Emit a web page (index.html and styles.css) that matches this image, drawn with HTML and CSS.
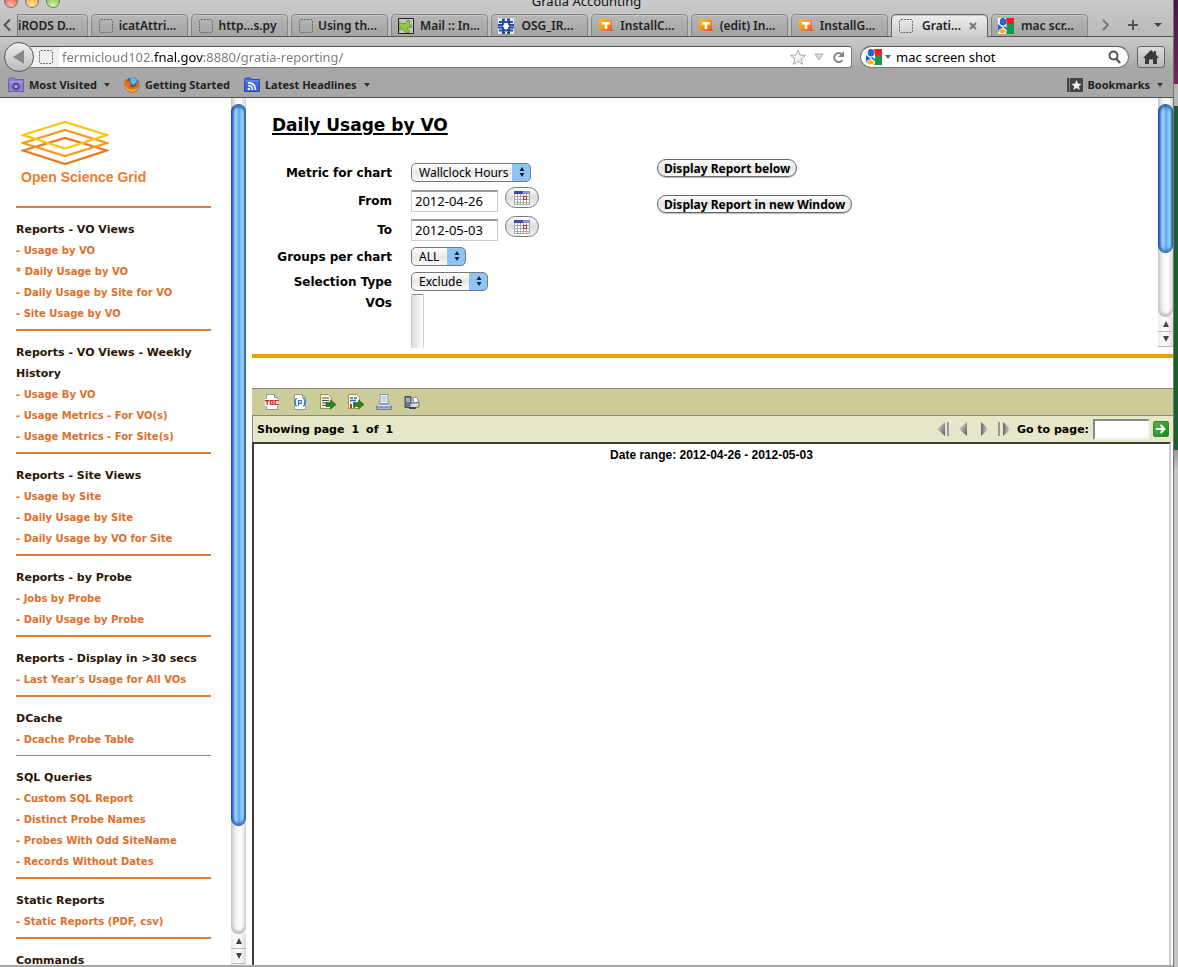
FILE: index.html
```html
<!DOCTYPE html>
<html lang="en">
<head>
<meta charset="utf-8">
<title>Gratia Accounting</title>
<link rel="stylesheet" href="styles.css">
</head>
<body>
<svg class="defs" aria-hidden="true">
  <defs>
    <linearGradient id="orange" x1="0" y1="0" x2="1" y2="1"><stop offset="0" stop-color="#f8c71c"/><stop offset=".5" stop-color="#f7931e"/><stop offset="1" stop-color="#ee3f24"/></linearGradient>
    <linearGradient id="steel" x1="0" y1="0" x2="1" y2="1"><stop offset="0" stop-color="#eee"/><stop offset="1" stop-color="#555"/></linearGradient>
    <linearGradient id="steelr" x1="1" y1="0" x2="0" y2="0"><stop offset="0" stop-color="#eee"/><stop offset="1" stop-color="#666"/></linearGradient>
    <symbol id="blank" viewBox="0 0 16 16"><rect x="1.5" y="1.5" width="13" height="13" rx="1.5" fill="none" stroke="#6b6b6b" stroke-dasharray="2 1"/></symbol>
    <symbol id="twiki" viewBox="0 0 16 16"><path d="M3 1h9q2 0 2 2v8q0 1 2 2H4q-3 0-3-3V3q0-2 2-2z" fill="url(#orange)"/><path d="M4 4h8v2.400H9.300V11H6.700V6.400H4z" fill="#fff"/></symbol>
    <symbol id="google" viewBox="0 0 16 16"><path d="M0 0h8v16H0z" fill="#fff"/><path d="M8 0h8v6H9z" fill="#f01d25"/><path d="M9 6h7v10H8q2-3 0-5 2-2 1-5z" fill="#129a46"/><path d="M0 6l5 4-1 3-4 1z" fill="#2a62c9"/><ellipse cx="5" cy="3.800" rx="3.300" ry="3.800" fill="#2a62c9"/><path d="M5 8l3 1 1 3-3-2z" fill="#2a62c9"/><ellipse cx="4.500" cy="13.300" rx="3.800" ry="2.500" fill="#f6b21b" stroke="#fff" stroke-width=".8"/></symbol>
    <symbol id="calendar" viewBox="0 0 16 14"><path d="M0 0h16v14H0z" fill="#aaa"/><path d="M0 0h9v3H0z" fill="#3d46b4"/><path d="M9 0h7v3H9z" fill="#8b92c4"/><path d="M1 3h2v2H1zm3 0h2v2H4zm3 0h2v2H7zm3 0h2v2h-2zm3 0h2v2h-2zM1 6h2v2H1zm3 0h2v2H4zm3 0h2v2H7zm6 0h2v2h-2zM1 9h2v2H1zm3 0h2v2H4zm3 0h2v2H7zm3 0h2v2h-2zm3 0h2v2h-2zM1 12h2v1H1zm3 0h2v1H4zm3 0h2v1H7zm3 0h2v1h-2zm3 0h2v1h-2z" fill="#fff"/><path d="M9.500 5.500h3v3h-3z" fill="#fff" stroke="#b22"/></symbol>
    <symbol id="updown" viewBox="0 0 8 12"><path d="M1.500 5L4 1l2.500 4zM1.500 7L4 11l2.500-4z" fill="#14233a"/></symbol>
  </defs>
</svg>
<div class="screen">
  <div class="window">
    <header class="chrome">
      <div class="titlebar">
        <div class="lights"><i class="light red"></i><i class="light amber"></i><i class="light green"></i></div>
        <span class="title">Gratia Accounting</span>
      </div>
      <nav class="tabs" aria-label="Tabs">
        <button class="scroll" aria-label="Previous tabs"><svg width="10" height="14" viewBox="0 0 10 14"><path d="M8 1.500L2.500 7 8 12.500" fill="none" stroke="#555" stroke-width="2"/></svg></button>
        <button class="tab first">iRODS D...</button>
        <button class="tab"><svg class="ico"><use href="#blank"/></svg><span>icatAttri...</span></button>
        <button class="tab"><svg class="ico"><use href="#blank"/></svg><span>http...s.py</span></button>
        <button class="tab"><svg class="ico"><use href="#blank"/></svg><span>Using th...</span></button>
        <button class="tab near"><svg class="ico" viewBox="0 0 16 16"><path d="M.5.5h15v15H.5z" fill="#c3c6ca" stroke="#222"/><path d="M1 4l3 2 2-1 1 1 3-4 2 1-1 3 3 2-1 2-3-1-1 2 3 2-1 2-4-1-2-3-4 1 1-3-1-2z" fill="#94c83d" stroke="#4a7a1c" stroke-width=".6"/></svg><span>Mail :: In...</span></button>
        <button class="tab"><svg class="ico" viewBox="0 0 16 16"><path d="M0 0h16v16H0z" fill="#e6eaf3"/><g stroke="#2149a5" stroke-width="1.800"><path d="M4 1.500h3M9 1.500h3M1 4h14M0 7h5M11 7h5M0 9.500h5M11 9.500h5M1 12.500h14M4 15h3M9 15h3M5 1v14M11 1v14"/></g><path d="M8 3.500L9.500 7 13 8 9.500 9.500 8 13 6.500 9.500 3 8l3.500-1z" fill="#fff"/><circle cx="8" cy="8" r="4" fill="none" stroke="#2149a5" stroke-width="1.200"/></svg><span>OSG_IR...</span></button>
        <button class="tab"><svg class="ico"><use href="#twiki"/></svg><span>InstallC...</span></button>
        <button class="tab"><svg class="ico"><use href="#twiki"/></svg><span>(edit) In...</span></button>
        <button class="tab"><svg class="ico"><use href="#twiki"/></svg><span>InstallG...</span></button>
        <button class="tab active"><svg class="ico"><use href="#blank"/></svg><span>Grati...</span><svg class="close" width="8" height="8" viewBox="0 0 8 8"><path d="M1 1l6 6M7 1L1 7" stroke="#777" stroke-width="2"/></svg></button>
        <button class="tab"><svg class="ico"><use href="#google"/></svg><span>mac scr...</span></button>
        <span class="tabtools">
          <button aria-label="Next tabs"><svg width="10" height="12" viewBox="0 0 10 12"><path d="M2 1l5 5-5 5" fill="none" stroke="#777" stroke-width="2"/></svg></button>
          <button aria-label="New tab"><svg width="10" height="10" viewBox="0 0 10 10"><path d="M5 0v10M0 5h10" stroke="#555" stroke-width="2"/></svg></button>
          <button aria-label="List all tabs"><svg width="8" height="4" viewBox="0 0 8 4"><path d="M0 0h8L4 4z" fill="#444"/></svg></button>
        </span>
      </nav>
      <div class="navbar">
        <button class="back" aria-label="Back"><svg width="14" height="14" viewBox="0 0 14 14"><path d="M1 7l11-7v14z" fill="#888"/></svg></button>
        <div class="urlbar">
          <svg class="ico"><use href="#blank"/></svg>
          <input class="url" type="text" aria-label="Address" value="fermicloud102.fnal.gov:8880/gratia-reporting/">
          <button aria-label="Bookmark this page"><svg width="16" height="16" viewBox="0 0 16 16"><path d="M8 1l2 5 5.500.4-4.300 3.500 1.500 5.400L8 12.300l-4.700 3 1.500-5.400L.5 6.400 6 6z" fill="#f4f4f4" stroke="#aaa"/></svg></button>
          <button aria-label="History"><svg width="10" height="8" viewBox="0 0 10 8"><path d="M1 1h8L5 7z" fill="#ddd" stroke="#aaa"/></svg></button>
          <button aria-label="Reload"><svg width="13" height="13" viewBox="0 0 13 13"><path d="M10.500 9a4.500 4.500 0 1 1-.5-5.500" fill="none" stroke="#888" stroke-width="2"/><path d="M12 0v6H6z" fill="#888"/></svg></button>
        </div>
        <div class="searchbar">
          <svg class="ico"><use href="#google"/></svg>
          <svg width="6" height="4" viewBox="0 0 6 4"><path d="M0 0h6L3 4z" fill="#666"/></svg>
          <input type="text" aria-label="Search" value="mac screen shot">
          <svg width="13" height="14" viewBox="0 0 13 14"><circle cx="5.500" cy="5.500" r="4" fill="none" stroke="#555" stroke-width="2"/><path d="M8 8.500l4 4.500" stroke="#555" stroke-width="2.500"/></svg>
        </div>
        <button class="home" aria-label="Home"><svg width="16" height="14" viewBox="0 0 16 14"><path d="M8 0l3 2.800V1h2v3.700L16 8h-2v6h-4V9.500H6V14H2V8H0z" fill="#3a3a3a"/></svg></button>
      </div>
      <nav class="bookmarks" aria-label="Bookmarks">
        <button><svg class="ico" viewBox="0 0 16 16"><path d="M.5 2.500l1-1.500h5l1 1.500h8v12H.5z" fill="#9181cb" stroke="#6d5fae"/><path d="M1 5h14" stroke="#b8acdf"/><circle cx="8" cy="9.500" r="2.500" fill="none" stroke="#5a4aa3" stroke-width="2"/><path d="M8 5v9M3.500 9.500h9M5 6.500l6 6M11 6.500l-6 6" stroke="#5a4aa3"/><circle cx="8" cy="9.500" r="1.500" fill="#b8acdf"/></svg>Most Visited<i class="caret"></i></button>
        <button><svg class="ico" viewBox="0 0 16 16"><circle cx="8" cy="8" r="7.500" fill="#2463b4"/><path d="M6 1q5-1 7 3l-3 4-3-2z" fill="#65b9e9"/><path d="M1 2l2 1.500L7 4 5.500 6l3 1L6 8.500q1 2.500 4 1.500 3-1 2.500-6L15 6q1 5-2.500 8-4 3-8.500.5Q-1 10 1 2z" fill="#e66b12"/><path d="M1 7q2 6 8 5.500 4-.5 5.800-4Q14 14 8 15 1 14 1 7z" fill="#f9a51b"/></svg>Getting Started</button>
        <button><svg class="ico" viewBox="0 0 16 16"><path d="M.5 2.500l1-1.500h5l1 1.500h8v12H.5z" fill="#3f68dc" stroke="#2749b5"/><path d="M1 4h14" stroke="#7d9bf0"/><circle cx="5" cy="12" r="1.300" fill="#fff"/><path d="M4 8.500q4.500 0 4.500 4.500M4 5.700q7.500 0 7.500 7.300" fill="none" stroke="#fff" stroke-width="1.500"/></svg>Latest Headlines<i class="caret"></i></button>
        <button class="right"><svg class="ico" viewBox="0 0 16 16"><path d="M0 1h16v14H0z" fill="#444"/><path d="M2 1h1v14H2z" fill="#888"/><path d="M9.500 3l1.500 3.600 3.700.3-2.900 2.400 1 3.700-3.300-2-3.300 2 1-3.700-2.900-2.400 3.700-.3z" fill="#eee"/></svg>Bookmarks<i class="caret"></i></button>
      </nav>
    </header>

    <div class="page">
      <aside class="sidebar">
        <div class="logo">
          <svg width="88" height="44" viewBox="0 0 88 44"><g fill="none" stroke-width="2.300"><path d="M2 29.500L44 17l42 12.500L44 43z" stroke="#ee7623"/><path d="M2 22L44 9l42 13-42 13z" stroke="#f39a1f"/><path d="M2 14L44 1l42 13-42 13.500z" stroke="#fbc70d"/></g></svg>
          <span>Open Science Grid</span>
        </div>
        <section><h2>Reports - VO Views</h2><a href="#">- Usage by VO</a><a href="#">* Daily Usage by VO</a><a href="#">- Daily Usage by Site for VO</a><a href="#">- Site Usage by VO</a></section>
        <section><h2>Reports - VO Views - Weekly History</h2><a href="#">- Usage By VO</a><a href="#">- Usage Metrics - For VO(s)</a><a href="#">- Usage Metrics - For Site(s)</a></section>
        <section><h2>Reports - Site Views</h2><a href="#">- Usage by Site</a><a href="#">- Daily Usage by Site</a><a href="#">- Daily Usage by VO for Site</a></section>
        <section><h2>Reports - by Probe</h2><a href="#">- Jobs by Probe</a><a href="#">- Daily Usage by Probe</a></section>
        <section><h2>Reports - Display in &gt;30 secs</h2><a href="#">- Last Year's Usage for All VOs</a></section>
        <section><h2>DCache</h2><a href="#">- Dcache Probe Table</a></section>
        <section class="thin"><h2>SQL Queries</h2><a href="#">- Custom SQL Report</a><a href="#">- Distinct Probe Names</a><a href="#">- Probes With Odd SiteName</a><a href="#">- Records Without Dates</a></section>
        <section><h2>Static Reports</h2><a href="#">- Static Reports (PDF, csv)</a></section>
        <section><h2>Commands</h2></section>
      </aside>
      <div class="scrollbar"><div class="track"><div class="thumb tall"></div></div><i class="arrow up"></i><i class="arrow down"></i></div>

      <main class="content">
        <div class="params">
          <form class="form">
            <h1>Daily Usage by VO</h1>
            <div class="columns">
              <div class="fields">
                <label for="metric">Metric for chart</label>
                <span class="select wide"><select id="metric"><option>Wallclock Hours</option></select><svg width="8" height="12"><use href="#updown"/></svg></span>
                <label for="from">From</label>
                <span class="date"><input id="from" type="text" value="2012-04-26"><button type="button" aria-label="Pick start date"><svg width="16" height="14"><use href="#calendar"/></svg></button></span>
                <label for="to">To</label>
                <span class="date"><input id="to" type="text" value="2012-05-03"><button type="button" aria-label="Pick end date"><svg width="16" height="14"><use href="#calendar"/></svg></button></span>
                <label for="groups">Groups per chart</label>
                <span class="select small"><select id="groups"><option>ALL</option></select><svg width="8" height="12"><use href="#updown"/></svg></span>
                <label for="seltype">Selection Type</label>
                <span class="select medium"><select id="seltype"><option>Exclude</option></select><svg width="8" height="12"><use href="#updown"/></svg></span>
                <label class="top" for="vos">VOs</label>
                <select class="list" id="vos" multiple></select>
              </div>
              <div class="actions">
                <button type="button">Display Report below</button>
                <button type="button">Display Report in new Window</button>
              </div>
            </div>
          </form>
          <div class="scrollbar"><div class="track"><div class="thumb short"></div></div><i class="arrow up"></i><i class="arrow down"></i></div>
        </div>
        <div class="viewer">
          <div class="toolbar">
            <button aria-label="Table of contents"><svg class="ico" viewBox="0 0 16 16"><path d="M2.500.5h8l3 3v12h-11z" fill="#fff" stroke="#8b98a8"/><path d="M10.500.5v3h3" fill="#c8d3e0" stroke="#8b98a8"/><path d="M1 5h13v7H1z" fill="#fff"/><g fill="none" stroke="#d8201c" stroke-width="1.300"><path d="M1 6.600h4.400M3.200 6.600V11M6.500 6.600h2.500v3.800H6.500zM14.500 6.600h-3.500v3.800h3.500"/></g></svg></button>
            <button aria-label="Run report"><svg class="ico" viewBox="0 0 16 16"><path d="M2.500.5h8l3 3v12h-11z" fill="#fff" stroke="#8b98a8"/><path d="M10.500.5v3h3" fill="#c8d3e0" stroke="#8b98a8"/><g fill="none" stroke="#2678ac" stroke-width="1.200"><path d="M5 4.500q-1.500 0-1.500 1.500v1L2.500 8l1 1v1.500Q3.500 12 5 12M11 4.500q1.500 0 1.500 1.500v1l1 1-1 1v1.500Q12.500 12 11 12M6.500 12V6.500h2.700v3H6.500"/></g></svg></button>
            <button aria-label="Export data"><svg class="ico" viewBox="0 0 16 16"><path d="M.5.500h8l3 3v11H.5z" fill="#f6f3d2" stroke="#94916c"/><path d="M2 4h7M2 6.500h7M2 9h5M2 11.500h5" stroke="#4b5968"/><path d="M6 8.500h4.500V6L16 10.500 10.500 15v-2.500H6z" fill="#2f7d20" stroke="#205c16" stroke-width=".6"/></svg></button>
            <button aria-label="Export report"><svg class="ico" viewBox="0 0 16 16"><path d="M.5.500h8l3 3v11H.5z" fill="#fff" stroke="#c28b37"/><path d="M2 4h3M6 4h3M2 6.500h6" stroke="#2c6aa8" stroke-width="1.500"/><path d="M2 10h2v4H2z" fill="#d92b20"/><path d="M5 8h2v6H5z" fill="#2b8fc7"/><path d="M6 8.500h4.500V6L16 10.500 10.500 15v-2.500H6z" fill="#2f7d20" stroke="#205c16" stroke-width=".6"/></svg></button>
            <button aria-label="Print report"><svg class="ico" viewBox="0 0 16 16"><path d="M4 .5h8v9H4z" fill="#f4f8fc" stroke="#7b92b3"/><path d="M5.500 3h5M5.500 5h5M5.500 7h5" stroke="#94acd0"/><path d="M2.500 9.500H4v1h8v-1h1.500l2 3.500H.5z" fill="#d5dbe6" stroke="#8d98aa" stroke-width=".8"/><path d="M.5 13h15v2.500H.5z" fill="#a3b7d6" stroke="#5a6e90" stroke-width=".8"/></svg></button>
            <button aria-label="Print on server"><svg class="ico" viewBox="0 0 16 16"><path d="M1 2.500h6v11H1z" fill="#677787" stroke="#45515d"/><path d="M2 5h4M2 7h4" stroke="#e7edf2"/><path d="M9 4l4-1 1.500 5L10 9.500z" fill="#fff" stroke="#889"/><path d="M6 9.500l9-1v4l-6 2H6z" fill="#d5dbe1" stroke="#66717c"/><path d="M5 14h7" stroke="#3d474f" stroke-width="2"/></svg></button>
          </div>
          <div class="pager">
            <span class="showing"><span>Showing page</span><span>1</span><span>of</span><span>1</span></span>
            <button aria-label="First page"><svg width="14" height="14" viewBox="0 0 14 14"><path d="M8 0v14L0 7z" fill="url(#steel)"/><path d="M10 0h2v14h-2z" fill="#999"/></svg></button>
            <button aria-label="Previous page"><svg width="14" height="14" viewBox="0 0 14 14"><path d="M10 0v14L2 7z" fill="url(#steel)"/></svg></button>
            <button aria-label="Next page"><svg width="14" height="14" viewBox="0 0 14 14"><path d="M4 0v14l8-7z" fill="url(#steelr)"/></svg></button>
            <button aria-label="Last page"><svg width="14" height="14" viewBox="0 0 14 14"><path d="M6 0v14l8-7z" fill="url(#steelr)"/><path d="M1 0h2v14H1z" fill="#999"/></svg></button>
            <label for="goto">Go to page:</label>
            <input id="goto" type="text">
            <button class="go" aria-label="Go"><svg width="10" height="10" viewBox="0 0 10 10"><path d="M0 5h8M4.500 1l4 4-4 4" fill="none" stroke="#fff" stroke-width="2"/></svg></button>
          </div>
          <div class="report">Date range: 2012-04-26 - 2012-05-03</div>
        </div>
      </main>
    </div>
  </div>
  <div class="desktop" aria-hidden="true"><div class="wall"></div><div class="bar"></div><div class="terminal"></div><div class="rest"></div></div>
</div>
</body>
</html>
```
FILE: styles.css
```css
* { box-sizing: border-box; }
body { margin: 0; background: #fff; color: #000; font-family: "DejaVu Sans", Verdana, sans-serif; }
button { margin: 0; padding: 0; border: 0; background: none; color: inherit; font: inherit; white-space: nowrap; }
input, select { margin: 0; font: inherit; color: inherit; min-width: 0; outline: 0; }
svg { display: block; flex: none; }
.defs { position: absolute; width: 0; height: 0; }
.ico { width: 16px; height: 16px; }
.screen { display: flex; height: 100vh; overflow: hidden; }
.window { flex: 1; min-width: 0; display: flex; flex-direction: column; border-bottom: 2px solid #a5a5a5; }

/* Browser chrome */
.chrome { flex: none; background: linear-gradient(#cbcbcb, #b9b9b9 36px, #c9c9c9 38px, #a7a7a7 70px); border-bottom: 1px solid #505050; font: 600 12px/16px "Noto Sans", "Open Sans", sans-serif; color: #222; }
.titlebar { position: relative; height: 14px; overflow: hidden; display: flex; justify-content: center; align-items: flex-end; }
.title { font-weight: 400; font-size: 13px; line-height: 26px; color: #111; height: 26px; }
.lights { position: absolute; left: 4px; top: -6px; display: flex; gap: 7px; }
.light { width: 14px; height: 14px; border-radius: 50%; border: 1px solid #776; }
.red { background: radial-gradient(circle at 50% 90%, #ffb8b0, #e0423c); }
.amber { background: radial-gradient(circle at 50% 90%, #ffe9a0, #e89b2a); }
.green { background: radial-gradient(circle at 50% 90%, #d8f4a8, #6fae3d); }
.tabs { display: flex; gap: 3px; height: 23px; border-bottom: 1px solid #585858; }
.scroll { width: 14px; padding-left: 2px; }
.tab { display: flex; align-items: center; flex: 0 1 97px; min-width: 0; height: 22px; padding: 0 6px; background: linear-gradient(#b7b7b7, #a3a3a3); border: 1px solid #868686; border-bottom: 0; border-radius: 5px 5px 0 0; box-shadow: inset 0 1px #c8c8c8; overflow: hidden; }
.tab span { flex: 1; text-align: center; }
.tab.near span { text-align: left; padding-left: 6px; }
.tab.first { flex-basis: 71px; padding: 0; border-left: 1px solid #777; border-radius: 0 5px 0 0; }
.tab.active { height: 23px; background: linear-gradient(#eee, #ccc); border-color: #666; }
.close { margin-right: 4px; }
.tabtools { display: flex; flex: 1; align-items: center; justify-content: space-between; padding: 0 11px 0 10px; }
.navbar { display: flex; align-items: center; height: 40px; padding: 0 8px 0 4px; }
.back { z-index: 1; width: 30px; height: 30px; padding-left: 7px; border: 1px solid #555; border-radius: 50%; background: linear-gradient(#eee, #bbb); }
.urlbar { display: flex; flex: 1; align-items: center; height: 22px; margin-left: -4px; padding: 0 6px 0 8px; gap: 8px; background: linear-gradient(90deg, #f0f0f0 29px, #fff 29px); border: 1px solid #777; border-top-color: #555; border-left: 0; border-radius: 0 3px 3px 0; }
.urlbar input { flex: 1; border: 0; padding: 0; height: 20px; font-weight: 400; font-size: 13px; color: transparent; background: linear-gradient(90deg, #777 91px, #000 91px 142px, #777 142px); -webkit-background-clip: text; background-clip: text; }
.searchbar { display: flex; align-items: center; gap: 3px; width: 269px; height: 22px; margin: 0 8px; padding: 0 7px 0 5px; background: #fff; border: 1px solid #777; border-top-color: #555; border-radius: 11px; }
.searchbar input { flex: 1; border: 0; padding: 0 0 0 2px; height: 20px; font-weight: 400; font-size: 13px; background: none; color: #000; }
.home { display: grid; place-items: center; width: 28px; height: 22px; border: 1px solid #666; border-radius: 3px; background: linear-gradient(#ddd, #b8b8b8); }
.bookmarks { display: flex; gap: 14px; height: 20px; padding: 0 10px 0 8px; font-size: 11px; font-weight: 700; }
.bookmarks button { display: flex; align-items: center; height: 16px; gap: 5px; }
.bookmarks .right { margin-left: auto; }
.caret { border: 3px solid transparent; border-top: 4px solid #333; border-bottom: 0; margin-left: 2px; }

/* Page frames */
.page { flex: 1; min-height: 0; display: flex; }
.sidebar { width: 231px; flex: none; padding: 23px 20px 0 16px; overflow: hidden; font-size: 10px; line-height: 21px; font-weight: 700; }
.logo { height: 85px; padding-left: 5px; }
.logo span { display: block; margin-top: 3px; font: 700 14px/18px "Liberation Sans", Arial, sans-serif; color: #ee7c2b; }
.sidebar section { padding: 11px 0 5px; border-top: 2px solid #e07b39; }
.sidebar section:last-child { padding-bottom: 0; }
.sidebar .thin { border-top: 1px solid #888; }
.sidebar h2 { margin: 0; font-size: 11px; line-height: 21px; color: #2e1503; }
.sidebar a { display: block; color: #dd6f2b; text-decoration: none; white-space: nowrap; }
.scrollbar { width: 15px; flex: none; display: flex; flex-direction: column; padding-bottom: 1px; background: #f4f4f4; }
.track { flex: 1; padding-top: 6px; background: linear-gradient(90deg, #ccc, #f3f3f3 35%, #fff 65%, #ddd); border-radius: 0 0 8px 8px; box-shadow: inset 0 -3px 3px #bbb; }
.thumb { border: 1px solid #3a5f96; border-left-color: #1d4fae; border-radius: 8px; background: linear-gradient(90deg, #2c6fd0, #a9cff5 25%, #86bdf3 45%, #58a5ee 52%, #a3e0fe 85%, #5a8ec4); box-shadow: inset 0 2px 3px #2460bb, inset 0 -2px 3px #2f7ad0; }
.thumb.tall { height: 87%; }
.thumb.short { height: 70%; }
.arrow { display: grid; place-items: center; height: 15px; background: linear-gradient(90deg, #eee, #fff, #ddd); border-bottom: 1px solid #bbb; }
.arrow::before { content: ""; border: 3px solid transparent; }
.up::before { border-bottom: 6px solid #444; border-top: 0; }
.down::before { border-top: 6px solid #444; border-bottom: 0; }
.content { flex: 1; min-width: 0; margin-left: 6px; display: flex; flex-direction: column; }

/* Report parameters */
.params { display: flex; flex: none; height: 260px; padding-bottom: 6px; border-bottom: 4px solid #dba901; }
.form { flex: 1; min-width: 0; padding: 16px 0 0 20px; overflow: hidden; }
h1 { margin: 0; font-size: 17px; line-height: 22px; text-decoration: underline; text-decoration-thickness: 2px; text-underline-offset: 2px; }
.columns { display: flex; gap: 117px; margin-top: 23px; }
.fields { display: grid; grid-template-columns: 120px 129px; grid-template-rows: 27px 29px 29px 25px 25px 54px; column-gap: 19px; align-items: center; font-size: 12px; font-weight: 700; }
.fields label { text-align: right; white-space: nowrap; }
.fields .top { align-self: start; padding-top: 2px; }
.select { position: relative; display: block; height: 19px; }
.select select { width: 100%; height: 19px; padding: 0 0 0 7px; appearance: none; border: 1px solid #777; border-radius: 5px; background: linear-gradient(90deg, transparent calc(100% - 18px), #8fc4f4 calc(100% - 18px)), linear-gradient(#fff, #e8e8e8 50%, #fafafa); font: 400 12px/16px "Noto Sans", sans-serif; }
.select svg { position: absolute; right: 5px; top: 3px; pointer-events: none; }
.wide { width: 120px; }
.small { width: 55px; }
.medium { width: 77px; }
.date { display: flex; align-items: center; gap: 7px; }
.date input { width: 87px; height: 22px; padding: 0 3px; border: 1px solid #ccc; border-top: 2px solid #999; font: 400 13px/18px "Noto Sans", sans-serif; }
.date button { display: grid; place-items: center; width: 34px; height: 21px; flex: none; margin-bottom: 6px; border: 1px solid #777; border-radius: 11px; background: linear-gradient(#fff, #ddd 50%, #f8f8f8); }
.list { align-self: end; width: 13px; height: 54px; appearance: none; border: 1px solid #ccc; border-top: 1px solid #888; border-bottom: 0; padding: 0; background: linear-gradient(90deg, #ddd, #fff); overflow: hidden; }
.actions { display: flex; flex-direction: column; align-items: flex-start; gap: 18px; }
.actions button { height: 18px; padding: 0 6px; border: 1px solid #666; border-radius: 9px; background: linear-gradient(#fff, #e6e6e6 50%, #fafafa); box-shadow: 0 1px 1px #bbb; font: 700 12px/15px "Noto Sans", sans-serif; }

/* Report viewer */
.viewer { flex: 1; min-height: 0; margin-top: 30px; display: flex; flex-direction: column; font-size: 11px; font-weight: 700; }
.toolbar { display: flex; align-items: center; gap: 12px; height: 27px; padding-left: 12px; background: #cccc99; border-top: 1px solid #888; }
.pager { display: flex; align-items: center; gap: 6px; height: 27px; padding: 0 4px 0 4px; background: #e6e6c8; border-top: 1px solid #888; border-left: 1px solid #888; }
.showing { display: flex; gap: 7px; margin-right: auto; }
.pager label { white-space: nowrap; }
.pager input { width: 57px; height: 21px; margin-left: -2px; border: 2px solid #888; border-right-color: #eee; border-bottom-color: #eee; background: #fff; }
.go { display: grid; place-items: center; width: 16px; height: 16px; background: linear-gradient(135deg, #5ab04a, #0f8f1c); border: 1px solid #2c8a2c; border-radius: 2px; margin-left: -3px; }
.report { flex: 1; padding: 4px 0; border: 2px solid #3c3c3c; border-right-color: #ccc; border-bottom: 0; margin-right: 2px; text-align: center; font: 700 12px/14px "Liberation Sans", Arial, sans-serif; }

/* Desktop edge behind the window */
.desktop { width: 5px; flex: none; display: flex; flex-direction: column; border-left: 1px solid #777; }
.wall { height: 84px; background: linear-gradient(#471844, #74265f); }
.bar { height: 22px; background: #b5b5b5; }
.terminal { height: 344px; background: #15602c; }
.rest { flex: 1; background: linear-gradient(#999, #c4c4c4 20px); }
```
